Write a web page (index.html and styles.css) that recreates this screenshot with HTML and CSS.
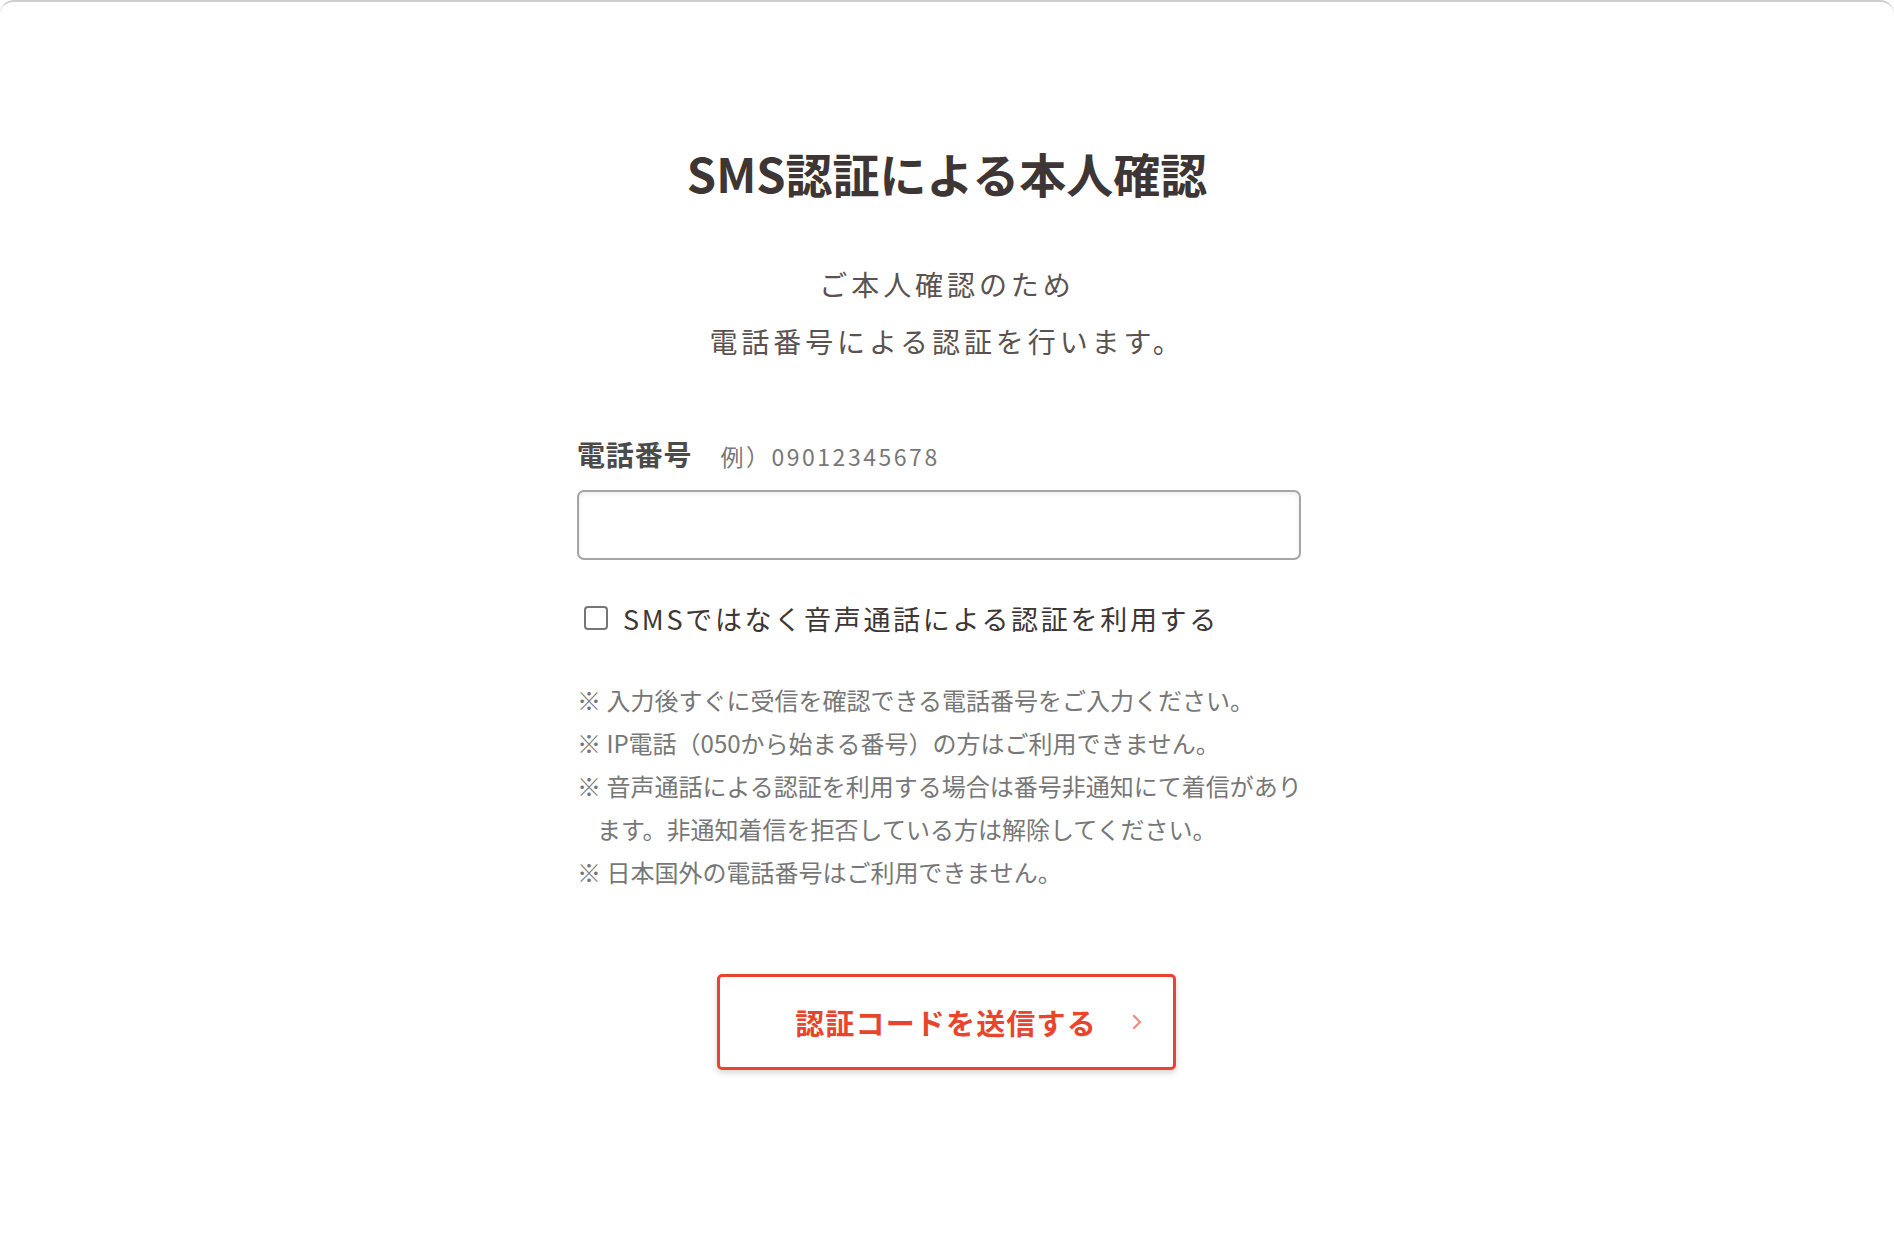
FILE: index.html
```html
<!DOCTYPE html>
<html lang="ja">
<head>
<meta charset="UTF-8">
<meta name="viewport" content="width=device-width, initial-scale=1.0">
<title>SMS認証による本人確認</title>
<link rel="stylesheet" href="styles.css">
</head>
<body>
<div class="frame">
  <main class="page">
    <h1 class="title">SMS認証による本人確認</h1>
    <p class="lead">ご本人確認のため<br>電話番号による認証を行います。</p>

    <form class="sms-form" id="sms-form">
      <div class="field-head">
        <label class="field-label" for="tel">電話番号</label>
        <span class="field-example">例）09012345678</span>
      </div>
      <input class="tel-input" type="tel" id="tel" aria-label="電話番号">

      <label class="check-row">
        <input class="check-box" type="checkbox" id="voice">
        <span class="check-text">SMSではなく音声通話による認証を利用する</span>
      </label>

      <ul class="notes">
        <li>※ 入力後すぐに受信を確認できる電話番号をご入力ください。</li>
        <li>※ IP電話（050から始まる番号）の方はご利用できません。</li>
        <li>※ 音声通話による認証を利用する場合は番号非通知にて着信があります。非通知着信を拒否している方は解除してください。</li>
        <li>※ 日本国外の電話番号はご利用できません。</li>
      </ul>

      <div class="actions">
        <button class="send-btn" type="submit">
          <span>認証コードを送信する</span>
          <svg class="send-arrow" width="10" height="16" viewBox="0 0 10 16" aria-hidden="true">
            <path d="M2 2 L8 8 L2 14" fill="none" stroke="currentColor" stroke-width="2.4" stroke-linecap="round" stroke-linejoin="round"/>
          </svg>
        </button>
      </div>
    </form>
  </main>
</div>
</body>
</html>
```

FILE: styles.css
```css
/* base */
* {
  box-sizing: border-box;
}

body {
  margin: 0;
  background: #fff;
  font-family: "Noto Sans CJK JP", "Noto Sans", sans-serif;
  color: #3e3634;
}

.frame {
  min-height: 100vh;
  border-top: 2px solid #cfcfcf;
  border-radius: 14px;
}

.page {
  padding-top: 140px;
  padding-bottom: 120px;
}

/* heading */
.title {
  margin: 0;
  font-size: 47px;
  line-height: 62px;
  font-weight: 700;
  text-align: center;
  color: #3e3634;
}

.lead {
  margin: 52px 0 0;
  font-size: 28px;
  line-height: 57px;
  letter-spacing: 0.14em;
  text-align: center;
  color: #5b5250;
}

/* form */
.sms-form {
  width: 740px;
  margin: 64px auto 0;
}

.field-head {
  display: flex;
  align-items: baseline;
  height: 40px;
  line-height: 40px;
}

.field-label {
  font-size: 28px;
  font-weight: 700;
  letter-spacing: 0.03em;
  color: #4d4a4a;
}

.field-example {
  margin-left: 28px;
  font-size: 23px;
  letter-spacing: 0.11em;
  color: #777;
}

.tel-input {
  display: block;
  width: 724px;
  height: 70px;
  margin-top: 16px;
  padding: 0 16px;
  border: 2px solid #a5a5a5;
  border-radius: 7px;
  box-shadow: inset 0 2px 4px rgba(0, 0, 0, 0.08);
  font-family: inherit;
  font-size: 24px;
  outline: none;
}

.check-row {
  display: flex;
  align-items: center;
  height: 40px;
  margin-top: 38px;
  padding-left: 7px;
  cursor: pointer;
}

.check-box {
  appearance: none;
  -webkit-appearance: none;
  width: 24px;
  height: 24px;
  margin: 0;
  border: 2px solid #767676;
  border-radius: 4px;
  background: #fff;
}

.check-text {
  margin-left: 15px;
  font-size: 27px;
  letter-spacing: 0.1em;
  color: #3e3634;
}

.notes {
  list-style: none;
  margin: 40px 0 0;
  padding: 0 0 0 20px;
  font-size: 24px;
  line-height: 43px;
  color: #777;
}

.notes li {
  text-indent: -20px;
}

/* button */
.actions {
  display: flex;
  justify-content: center;
  margin-top: 81px;
}

.send-btn {
  position: relative;
  display: flex;
  align-items: center;
  justify-content: center;
  width: 459px;
  height: 96px;
  margin-left: -2px;
  background: #fff;
  border: 3px solid #e8452c;
  border-radius: 5px;
  box-shadow: 0 3px 6px rgba(0, 0, 0, 0.16);
  font-family: inherit;
  font-size: 29px;
  font-weight: 700;
  letter-spacing: 0.04em;
  color: #e8452c;
  cursor: pointer;
}

.send-arrow {
  position: absolute;
  right: 31px;
  top: 50%;
  margin-top: -8px;
  color: #f08f80;
}
```
